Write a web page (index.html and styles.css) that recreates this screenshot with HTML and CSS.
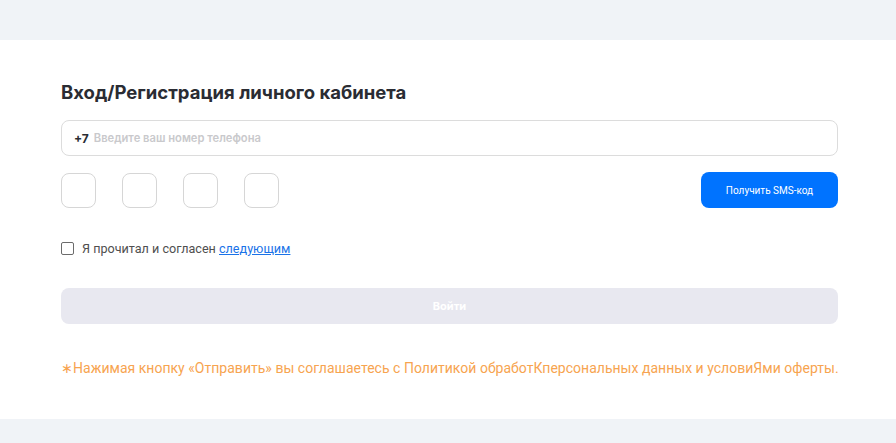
FILE: index.html
```html
<!DOCTYPE html>
<html lang="ru">
<head>
<meta charset="utf-8">
<title>Вход</title>
<link rel="stylesheet" href="styles.css">
</head>
<body>
<main class="card">
  <h1 class="title">Вход/Регистрация личного кабинета</h1>
  <div class="phone">
    <span class="prefix">+7</span>
    <input class="phone-input" type="text" placeholder="Введите ваш номер телефона">
  </div>
  <div class="code-row">
    <div class="codes">
      <input class="code" type="text" maxlength="1">
      <input class="code" type="text" maxlength="1">
      <input class="code" type="text" maxlength="1">
      <input class="code" type="text" maxlength="1">
    </div>
    <button class="sms-btn" type="button">Получить SMS-код</button>
  </div>
  <label class="agree">
    <span class="box"></span>
    <span>Я прочитал и согласен <a href="#" class="link">следующим</a></span>
  </label>
  <button class="login-btn" type="button">Войти</button>
  <p class="note">∗Нажимая кнопку «Отправить» вы соглашаетесь с Политикой обработКперсональных данных и условиЯми оферты.</p>
</main>
</body>
</html>
```
FILE: styles.css
```css
html, body {
  margin: 0;
  padding: 0;
}
body {
  background: #f0f3f7;
  font-family: Inter, "Noto Sans", sans-serif;
  padding: 40px 0 25px;
}
.card {
  background: #ffffff;
  padding: 37px 58px 42px 61px;
  display: flex;
  flex-direction: column;
}
.title {
  margin: 0;
  font-size: 18.5px;
  font-weight: 700;
  color: #2a2c33;
  line-height: 30px;
}
.phone {
  margin-top: 13px;
  height: 36px;
  box-sizing: border-box;
  border: 1px solid #dcdcdc;
  border-radius: 8px;
  display: flex;
  align-items: center;
  padding: 0 12px;
  gap: 5px;
}
.prefix {
  font-size: 12px;
  font-weight: 700;
  color: #2a2c33;
}
.phone-input {
  flex: 1;
  border: none;
  outline: none;
  font-family: Inter, "Noto Sans", sans-serif;
  font-size: 11.2px;
  font-weight: 600;
  padding: 0;
  color: #2a2c33;
  background: transparent;
}
.phone-input::placeholder {
  color: #c9c9cc;
}
.code-row {
  margin-top: 16px;
  display: flex;
  justify-content: space-between;
  align-items: center;
}
.codes {
  display: flex;
  gap: 26px;
}
.code {
  width: 35px;
  height: 35px;
  box-sizing: border-box;
  border: 1px solid #d6d6d6;
  border-radius: 8px;
  padding: 0;
  outline: none;
  background: #fff;
}
.sms-btn {
  width: 137px;
  height: 36px;
  border: none;
  border-radius: 8px;
  background: #0073ff;
  color: #ffffff;
  font-family: Roboto, "Liberation Sans", sans-serif;
  font-size: 10px;
  cursor: pointer;
}
.agree {
  margin-top: 32px;
  display: flex;
  align-items: center;
  gap: 8px;
  font-family: Roboto, "Liberation Sans", sans-serif;
  font-size: 12.6px;
  color: #4f4f4f;
  height: 16px;
}
.box {
  width: 11px;
  height: 11px;
  border: 1px solid #6b6b6b;
  border-radius: 2px;
  background: #fff;
}
.link {
  color: #1a73e8;
  text-decoration: underline;
}
.login-btn {
  margin-top: 32px;
  height: 36px;
  border: none;
  border-radius: 8px;
  background: #e8e8f0;
  color: #ffffff;
  font-family: Inter, "Noto Sans", sans-serif;
  font-size: 11px;
  font-weight: 700;
}
.note {
  margin: 35px 0 0;
  font-family: Roboto, "Liberation Sans", sans-serif;
  font-size: 14px;
  letter-spacing: 0.02px;
  white-space: nowrap;
  color: #f7a450;
  line-height: 18px;
}
```
